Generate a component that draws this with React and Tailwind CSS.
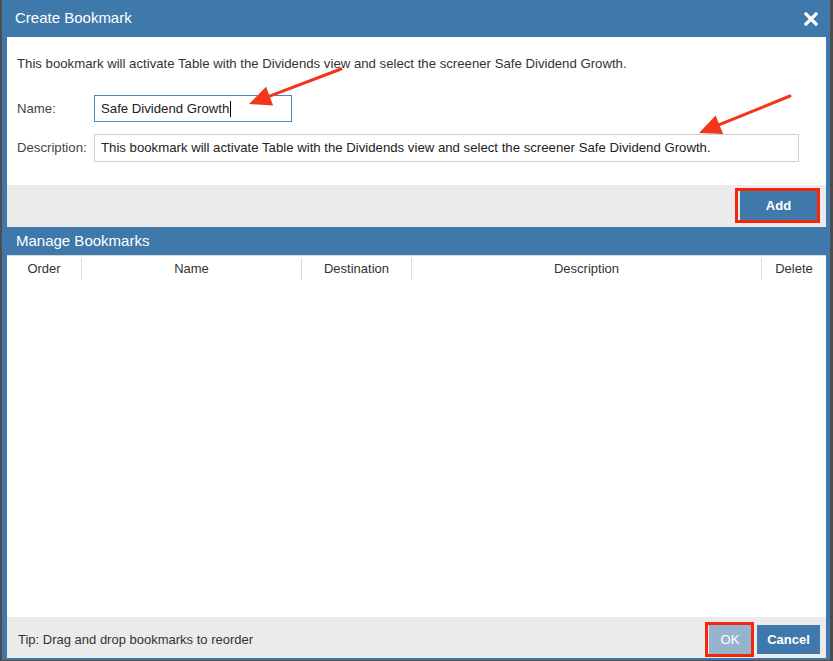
const font = { fontFamily: '"Liberation Sans", Arial, sans-serif' };

const columns = [
  { label: 'Order', width: 'w-[75px]' },
  { label: 'Name', width: 'w-[220px]' },
  { label: 'Destination', width: 'w-[110px]' },
  { label: 'Description', width: 'w-[350px]' },
  { label: 'Delete', width: 'flex-1' },
];

const Arrow = ({ x1, y1, x2, y2 }) => {
  const angle = Math.atan2(y2 - y1, x2 - x1);
  const len = 22;
  const half = 10;
  const bx = x2 - len * Math.cos(angle);
  const by = y2 - len * Math.sin(angle);
  const px = -Math.sin(angle) * half;
  const py = Math.cos(angle) * half;
  return (
    <g>
      <line x1={x1} y1={y1} x2={bx} y2={by} stroke="#f2361b" strokeWidth="3" strokeLinecap="round" />
      <polygon points={`${x2},${y2} ${bx + px},${by + py} ${bx - px},${by - py}`} fill="#f2361b" />
    </g>
  );
};

const App = () => {
  return (
    <div className="relative flex h-[661px] w-[833px] overflow-hidden bg-[#4d4d4d]" style={font}>
      <div className="ml-[2px] flex h-[660px] w-[828px] flex-col bg-[#3f79ab] pb-[2px] pl-[5px] pr-[4px]">
        <div className="-ml-[5px] -mr-[4px] flex h-[37px] shrink-0 items-center justify-between pl-[13px] pr-[12px]">
          <span className="text-[15px] text-white">Create Bookmark</span>
          <svg width="14" height="14" viewBox="0 0 14 14">
            <path d="M2 2 L12 12 M12 2 L2 12" stroke="#ffffff" strokeWidth="3.2" strokeLinecap="square" />
          </svg>
        </div>

        <div className="h-[148px] shrink-0 bg-white pl-[10px] pt-[19px] text-[13.2px] text-[#333]">
          <p className="leading-[15px]">
            This bookmark will activate Table with the Dividends view and select the screener Safe Dividend Growth.
          </p>
          <div className="mt-[24px] flex items-center">
            <span className="w-[77px] text-[#444]">Name:</span>
            <div className="flex h-[27px] w-[198px] items-center border border-[#4f87bd] px-[6px] text-[#222]">
              Safe Dividend Growth
              <span className="ml-[1px] inline-block h-[16px] w-px bg-black" />
            </div>
          </div>
          <div className="mt-[12px] flex items-center">
            <span className="w-[77px] text-[#444]">Description:</span>
            <div className="flex h-[28px] w-[705px] items-center border border-[#cfcfcf] px-[6px] text-[#222]">
              This bookmark will activate Table with the Dividends view and select the screener Safe Dividend Growth.
            </div>
          </div>
        </div>

        <div className="flex h-[42px] shrink-0 items-start justify-end bg-[#ebebeb] pr-[9px] pt-[6px]">
          <div className="relative">
            <button className="h-[29px] w-[77px] bg-[#3f79ab] text-[13px] font-bold text-white">Add</button>
            <span className="absolute -bottom-[3px] -left-[5px] -right-[3px] -top-[3px] border-[3px] border-[#f5250c]" />
          </div>
        </div>

        <div className="flex h-[28px] shrink-0 items-center pl-[9px] text-[15px] text-white">Manage Bookmarks</div>

        <div className="flex h-[27px] shrink-0 items-center border-t border-[#d9d9d9] bg-white text-[13px] text-[#333]">
          {columns.map((col, i) => (
            <div
              key={col.label}
              className={`${col.width} flex h-[22px] items-center justify-center ${i < columns.length - 1 ? 'border-r border-[#dcdcdc]' : ''}`}
            >
              {col.label}
            </div>
          ))}
        </div>

        <div className="flex-1 bg-white" />

        <div className="flex h-[41px] shrink-0 items-center justify-between bg-[#ebebeb] pl-[11px] pr-[6px] pt-[4px]">
          <span className="text-[13px] text-[#333]">Tip: Drag and drop bookmarks to reorder</span>
          <div className="flex items-center gap-[6px]">
            <div className="relative">
              <button className="h-[29px] w-[42px] bg-[#97b4cf] text-[13px] text-white">OK</button>
              <span className="absolute -bottom-[3px] -left-[4px] -right-[3px] -top-[3px] border-[3px] border-[#f5250c]" />
            </div>
            <button className="h-[29px] w-[63px] bg-[#3f79ab] text-[13px] font-bold text-white">Cancel</button>
          </div>
        </div>
      </div>

      <svg className="pointer-events-none absolute left-0 top-0" width="833" height="661">
        <Arrow x1={341} y1={69} x2={249} y2={104} />
        <Arrow x1={790} y1={96} x2={699} y2={133} />
      </svg>
    </div>
  );
};

export default App;
